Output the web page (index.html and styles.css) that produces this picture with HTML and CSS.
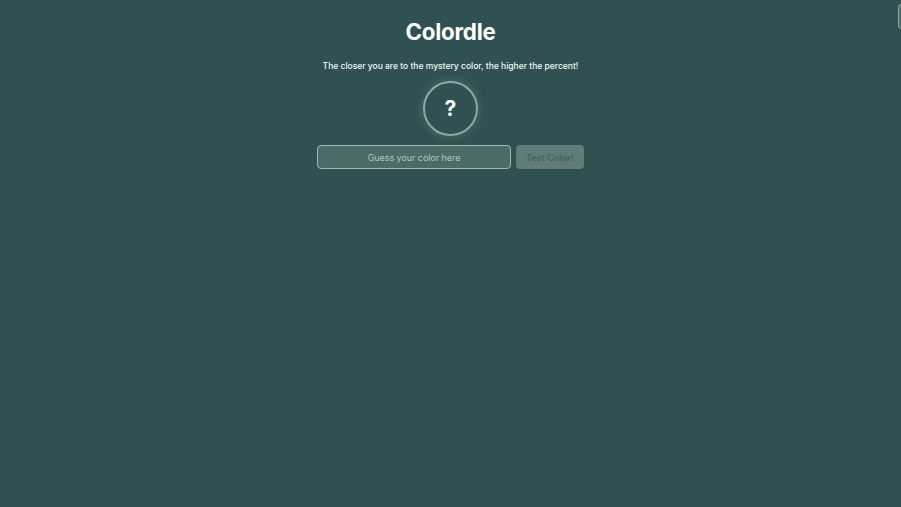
FILE: index.html
```html
<!DOCTYPE html>
<html lang="en">
<head>
  <meta charset="UTF-8" />
  <meta name="viewport" content="width=device-width, initial-scale=1.0" />
  <title>Colordle</title>
  <link rel="stylesheet" href="styles.css">
</head>
<body>
  <main class="game">
    <h1 class="title">Colordle</h1>
    <p class="subtitle">The closer you are to the mystery color, the higher the percent!</p>
    <div class="mystery">?</div>
    <form class="guess-form">
      <input class="guess-input" type="text" placeholder="Guess your color here" />
      <button class="guess-btn" type="button" disabled>Test Color!</button>
    </form>
  </main>
  <div class="side-tab"></div>
</body>
</html>
```

FILE: styles.css
```css
:root {
  --bg: #2f5151;
  --text: #ffffff;
  --ring: #8fa9a7;
  --field: #4b6b6a;
  --btn: #5f7c7a;
}
* { box-sizing: border-box; margin: 0; padding: 0; }
body {
  font-family: 'Inter', 'Liberation Sans', sans-serif;
  background: var(--bg);
  color: var(--text);
  min-height: 100vh;
  overflow: hidden;
}
.game {
  display: flex;
  flex-direction: column;
  align-items: center;
  padding-top: 18px;
}
.title {
  font-size: 22.3px;
  font-weight: 700;
  line-height: 28px;
  letter-spacing: -0.2px;
}
.subtitle {
  margin-top: 13px;
  font-size: 8.5px;
  font-weight: 500;
  line-height: 14px;
  color: #f2f6f5;
}
.mystery {
  margin-top: 8px;
  width: 55px;
  height: 55px;
  border-radius: 50%;
  border: 2px solid var(--ring);
  display: flex;
  align-items: center;
  justify-content: center;
  font-size: 21px;
  font-weight: 700;
  box-shadow: 0 0 6px 3px rgba(140, 170, 168, 0.18);
}
.guess-form {
  margin-top: 9px;
  display: flex;
  gap: 5px;
}
.guess-input {
  width: 194px;
  height: 24px;
  border: 1px solid #9fb5b3;
  border-radius: 4px;
  background: var(--field);
  color: #fff;
  font-family: inherit;
  font-size: 8.9px;
  text-align: center;
  outline: none;
}
.guess-input::placeholder { color: #b3c4c2; }
.guess-btn {
  width: 68px;
  height: 24px;
  border: none;
  border-radius: 4px;
  background: var(--btn);
  color: #47605f;
  font-family: inherit;
  font-size: 9px;
  font-weight: 600;
}
.side-tab {
  position: absolute;
  top: 4px;
  right: -4px;
  width: 7px;
  height: 25px;
  border: 1px solid #8fa5a4;
  border-radius: 3px;
  background: #4e6a69;
}
```
